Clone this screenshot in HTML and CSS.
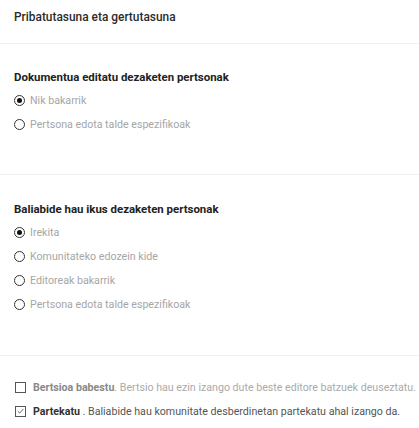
FILE: index.html
```html
<!DOCTYPE html>
<html lang="eu">
<head>
<meta charset="utf-8">
<title>Pribatutasuna eta gertutasuna</title>
<link rel="stylesheet" href="styles.css">
</head>
<body>
<div class="panel">
  <div class="header">Pribatutasuna eta gertutasuna</div>

  <section class="section s1">
    <h3 class="heading">Dokumentua editatu dezaketen pertsonak</h3>
    <ul class="options">
      <li class="option"><span class="radio checked"></span><span class="label">Nik bakarrik</span></li>
      <li class="option"><span class="radio"></span><span class="label">Pertsona edota talde espezifikoak</span></li>
    </ul>
  </section>

  <section class="section s2">
    <h3 class="heading">Baliabide hau ikus dezaketen pertsonak</h3>
    <ul class="options">
      <li class="option"><span class="radio checked"></span><span class="label">Irekita</span></li>
      <li class="option"><span class="radio"></span><span class="label">Komunitateko edozein kide</span></li>
      <li class="option"><span class="radio"></span><span class="label">Editoreak bakarrik</span></li>
      <li class="option"><span class="radio"></span><span class="label">Pertsona edota talde espezifikoak</span></li>
    </ul>
  </section>

  <section class="section s3">
    <ul class="checks">
      <li class="check-row muted">
        <span class="box"></span>
        <span class="check-text"><b>Bertsioa babestu</b>. Bertsio hau ezin izango dute beste editore batzuek deuseztatu.</span>
      </li>
      <li class="check-row">
        <span class="box">
          <svg viewBox="0 0 12 12" width="12" height="12"><path d="M2.3 6.2 L4.9 8.7 L9.8 3.4" fill="none" stroke="#444" stroke-width="1.1"/></svg>
        </span>
        <span class="check-text"><b>Partekatu</b> . Baliabide hau komunitate desberdinetan partekatu ahal izango da.</span>
      </li>
    </ul>
  </section>
</div>
</body>
</html>
```

FILE: styles.css
```css
html, body {
  margin: 0;
  padding: 0;
  background: #fff;
}

body {
  font-family: Roboto, "Noto Sans", "Liberation Sans", sans-serif;
  color: #333;
  width: 419px;
  height: 428px;
  overflow: hidden;
}

.header {
  padding: 9px 14px 18px;
  font-size: 11.9px;
  line-height: 16px;
  font-weight: 500;
  color: #2b2b2b;
  border-bottom: 1px solid #f0f0f0;
}

.section {
  border-bottom: 1px solid #f0f0f0;
}

.s1 {
  padding: 26px 14px 38px;
}

.s2 {
  padding: 27px 14px 39px;
}

.s3 {
  padding: 19px 14px 0;
  border-bottom: none;
}

.heading {
  margin: 0;
  font-size: 11.45px;
  line-height: 14px;
  font-weight: 700;
  color: #222;
}

.options,
.checks {
  list-style: none;
  margin: 0;
  padding: 0;
}

.options {
  margin-top: 4px;
}

.option {
  display: flex;
  align-items: center;
  height: 24px;
  gap: 5px;
}

.radio {
  box-sizing: border-box;
  width: 11px;
  height: 11px;
  border: 1px solid #333;
  border-radius: 50%;
  display: flex;
  align-items: center;
  justify-content: center;
  flex: none;
}

.radio.checked::after {
  content: "";
  width: 5px;
  height: 5px;
  border-radius: 50%;
  background: #111;
}

.label {
  font-size: 10.65px;
  color: #a6a6a6;
}

.check-row {
  display: flex;
  align-items: center;
  height: 24px;
  gap: 7px;
  padding-left: 1px;
}

.box {
  box-sizing: border-box;
  width: 11px;
  height: 11px;
  border: 1px solid #555;
  display: flex;
  align-items: center;
  justify-content: center;
  flex: none;
}

.box svg {
  display: block;
  width: 10px;
  height: 10px;
}

.check-text {
  font-size: 10.65px;
  color: #555;
  white-space: nowrap;
}

.check-text b {
  color: #333;
  font-weight: 700;
}

.muted .check-text {
  color: #aaa;
}

.muted .check-text b {
  color: #888;
}
```
